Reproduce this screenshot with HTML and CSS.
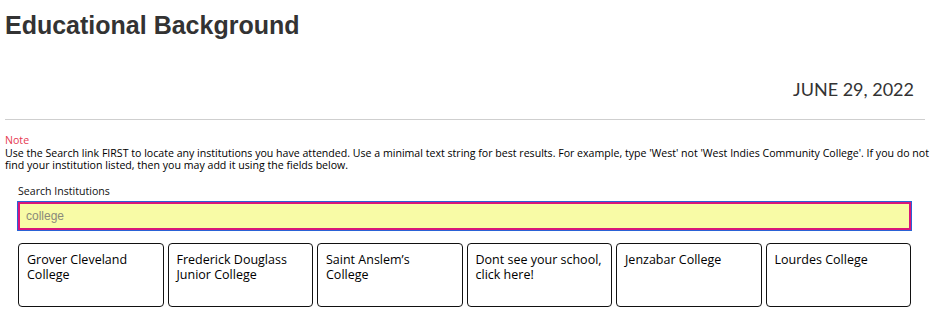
FILE: index.html
```html
<!DOCTYPE html>
<html lang="en">
<head>
<meta charset="utf-8">
<title>Educational Background</title>
<link rel="stylesheet" href="styles.css">
</head>
<body>
<div class="page">
  <h1 class="title">Educational Background</h1>
  <div class="date">JUNE 29, 2022</div>
  <div class="rule"></div>
  <div class="note">
    <div class="note-label">Note</div>
    <p class="note-text">Use the Search link FIRST to locate any institutions you have attended. Use a minimal text string for best results. For example, type 'West' not 'West Indies Community College'. If you do not find your institution listed, then you may add it using the fields below.</p>
  </div>
  <div class="search">
    <label class="search-label" for="inst">Search Institutions</label>
    <input class="search-input" id="inst" type="text" value="college">
    <div class="cards">
      <div class="card">Grover Cleveland College</div>
      <div class="card">Frederick Douglass Junior College</div>
      <div class="card">Saint Anslem’s College</div>
      <div class="card">Dont see your school, click here!</div>
      <div class="card">Jenzabar College</div>
      <div class="card">Lourdes College</div>
    </div>
  </div>
</div>
</body>
</html>
```

FILE: styles.css
```css
* { box-sizing: border-box; }
html, body { margin: 0; padding: 0; background: #fff; }
body { font-family: "Open Sans", "Liberation Sans", sans-serif; color: #000; }

.page {
  padding: 11px 0 0 5px;
}

.title {
  margin: 0;
  font-family: "Liberation Sans", Arial, sans-serif;
  font-weight: bold;
  font-size: 25px;
  line-height: 28px;
  color: #333;
}

.date {
  margin-top: 39px;
  margin-right: 22px;
  text-align: right;
  font-family: Lato, "Open Sans", sans-serif;
  font-size: 18px;
  line-height: 22px;
  color: #333;
}

.rule {
  margin-top: 19px;
  margin-right: 11px;
  height: 1px;
  background: #cfcfcf;
}

.note {
  margin-top: 14px;
  font-size: 10.6px;
  line-height: 12.5px;
}
.note-label { color: #e63950; }
.note-text { margin: 0; }

.search {
  margin: 13px 25px 0 13px;
  display: flex;
  flex-direction: column;
}
.search-label {
  font-size: 10.6px;
  line-height: 12.5px;
  font-weight: 500;
  color: #111;
}
.search-input {
  margin-top: 5px;
  height: 28px;
  width: 100%;
  border: 2px solid #d8157a;
  box-shadow: 0 0 0 1px #2a62d6;
  background: #f8fba6;
  font-family: "Liberation Sans", Arial, sans-serif;
  font-size: 12px;
  color: #8a8a7a;
  padding: 0 6px;
  outline: none;
  border-radius: 0;
}

.cards {
  margin-top: 13px;
  display: grid;
  grid-template-columns: repeat(6, 1fr);
  gap: 4px;
}
.card {
  height: 64px;
  border: 1px solid #111;
  border-radius: 4px;
  padding: 8px 8.5px 0 8px;
  font-size: 12.5px;
  line-height: 15px;
  color: #000;
}
```
